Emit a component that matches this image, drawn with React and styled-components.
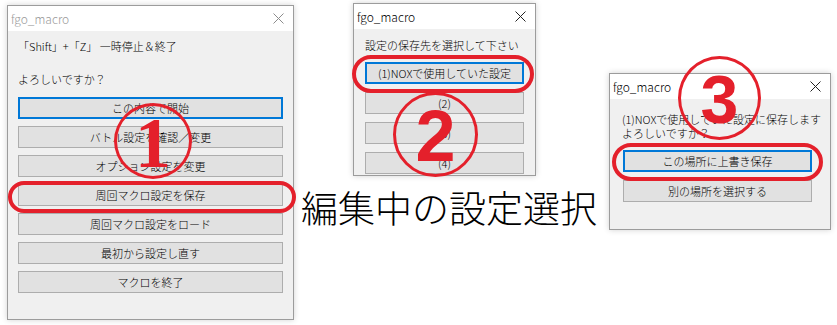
import React from "react";
import styled, { createGlobalStyle } from "styled-components";

const Global = createGlobalStyle`
  html, body {
    margin: 0;
    padding: 0;
    background: #ffffff;
  }
  body {
    font-family: "Noto Sans CJK JP", "Noto Sans", sans-serif;
  }
`;

const RED = "#e4202b";

let Canvas = styled.div`
  position: relative;
  width: 837px;
  height: 325px;
  overflow: hidden;
  background: #ffffff;
`;

let Window = styled.div`
  position: absolute;
  left: ${(p) => p.$x}px;
  top: ${(p) => p.$y}px;
  width: ${(p) => p.$w}px;
  height: ${(p) => p.$h}px;
  box-sizing: border-box;
  border: 1px solid #9c9c9c;
  background: #f0f0f0;
  box-shadow: 0 0 6px rgba(0, 0, 0, 0.18);
  display: flex;
  flex-direction: column;
  overflow: hidden;
`;

let TitleBar = styled.div`
  height: 25px;
  flex: none;
  background: #ffffff;
  display: flex;
  align-items: center;
  justify-content: space-between;
  padding: 0 9px 0 3px;
  font-size: 12px;
  font-weight: 300;
  color: ${(p) => (p.$inactive ? "#9a9a9a" : "#000")};
`;

let CloseX = styled.svg`
  width: 11px;
  height: 11px;
  stroke: ${(p) => (p.$inactive ? "#8c8c8c" : "#222")};
  stroke-width: 1;
`;

let Body = styled.div`
  display: flex;
  flex-direction: column;
  padding: ${(p) => p.$pad};
`;

let Label = styled.div`
  font-size: 11px;
  font-weight: 300;
  line-height: ${(p) => p.$lh || 14}px;
  color: #000;
  white-space: pre;
  margin-bottom: ${(p) => p.$mb || 0}px;
`;

let ButtonStack = styled.div`
  display: flex;
  flex-direction: column;
  gap: ${(p) => p.$gap}px;
`;

let Button = styled.div`
  height: 22px;
  box-sizing: border-box;
  border: ${(p) => (p.$focused ? "2px solid #0078d7" : "1px solid #adadad")};
  background: #e1e1e1;
  font-size: 11px;
  font-weight: 300;
  color: #000;
  display: flex;
  align-items: center;
  justify-content: center;
  white-space: nowrap;
`;

let Ring = styled.div`
  position: absolute;
  left: ${(p) => p.$x}px;
  top: ${(p) => p.$y}px;
  width: ${(p) => p.$w}px;
  height: ${(p) => p.$h}px;
  box-sizing: border-box;
  border: ${(p) => p.$stroke || 3}px solid ${RED};
  border-radius: ${(p) => p.$radius || "50%"};
  display: flex;
  align-items: center;
  justify-content: center;
`;

let Digit = styled.span`
  color: ${RED};
  font-weight: bold;
  font-size: ${(p) => p.$size}px;
  line-height: 1;
  font-family: ${(p) => (p.$serif ? '"Liberation Serif", serif' : '"Liberation Sans", "Noto Sans", sans-serif')};
  transform: translateY(${(p) => p.$dy || 0}px);
`;

let Caption = styled.div`
  position: absolute;
  left: 301px;
  top: 184px;
  font-size: 37px;
  font-weight: 300;
  line-height: 46px;
  color: #000;
  font-family: "Noto Sans CJK JP", sans-serif;
  white-space: nowrap;
`;

const Close = ({ inactive }) => (
  <CloseX $inactive={inactive} viewBox="0 0 11 11">
    <path d="M0.5 0.5 L10.5 10.5 M10.5 0.5 L0.5 10.5" fill="none" />
  </CloseX>
);

const MainMenu = () => {
  const items = [
    "この内容で開始",
    "バトル設定を確認／変更",
    "オプション設定を変更",
    "周回マクロ設定を保存",
    "周回マクロ設定をロード",
    "最初から設定し直す",
    "マクロを終了",
  ];
  return (
    <Window $x={7} $y={5} $w={287} $h={315}>
      <TitleBar $inactive>
        <span>fgo_macro</span>
        <Close inactive />
      </TitleBar>
      <Body $pad="8px 10px 0 10px">
        <Label $mb={19}>「Shift」+「Z」 一時停止＆終了</Label>
        <Label $mb={11}>よろしいですか？</Label>
        <ButtonStack $gap={7}>
          {items.map((t, i) => (
            <Button key={t} $focused={i === 0}>
              {t}
            </Button>
          ))}
        </ButtonStack>
      </Body>
    </Window>
  );
};

const SaveSlot = () => (
  <Window $x={353} $y={3} $w={183} $h={173}>
    <TitleBar>
      <span>fgo_macro</span>
      <Close />
    </TitleBar>
    <Body $pad="9px 11px 0 11px">
      <Label $mb={10}>設定の保存先を選択して下さい</Label>
      <ButtonStack $gap={8}>
        <Button $focused>(1)NOXで使用していた設定</Button>
        <Button>(2)</Button>
        <Button>(3)</Button>
        <Button>(4)</Button>
      </ButtonStack>
    </Body>
  </Window>
);

const Confirm = () => (
  <Window $x={609} $y={73} $w={222} $h={157}>
    <TitleBar>
      <span>fgo_macro</span>
      <Close />
    </TitleBar>
    <Body $pad="13px 18px 0 12px">
      <Label $lh={14}>(1)NOXで使用していた設定に保存します</Label>
      <Label $lh={14} $mb={10}>
        よろしいですか？
      </Label>
      <ButtonStack $gap={8} style={{ paddingLeft: 1 }}>
        <Button $focused>この場所に上書き保存</Button>
        <Button>別の場所を選択する</Button>
      </ButtonStack>
    </Body>
  </Window>
);

export default function App() {
  return (
    <Canvas>
      <Global />
      <MainMenu />
      <SaveSlot />
      <Confirm />

      <Ring $x={8} $y={181} $w={288} $h={32} $stroke={4} $radius="16px / 16px" />
      <Ring $x={352} $y={55} $w={182} $h={38} $stroke={4} $radius="19px" />
      <Ring $x={612} $y={143} $w={211} $h={38} $stroke={4} $radius="19px" />

      <Ring $x={114} $y={103} $w={78} $h={76}>
        <Digit $size={72} $serif $dy={2}>
          1
        </Digit>
      </Ring>
      <Ring $x={393} $y={92} $w={85} $h={85}>
        <Digit $size={72} $dy={1}>
          2
        </Digit>
      </Ring>
      <Ring $x={678} $y={56} $w={83} $h={84}>
        <Digit $size={68} $dy={1}>
          3
        </Digit>
      </Ring>

      <Caption>編集中の設定選択</Caption>
    </Canvas>
  );
}
